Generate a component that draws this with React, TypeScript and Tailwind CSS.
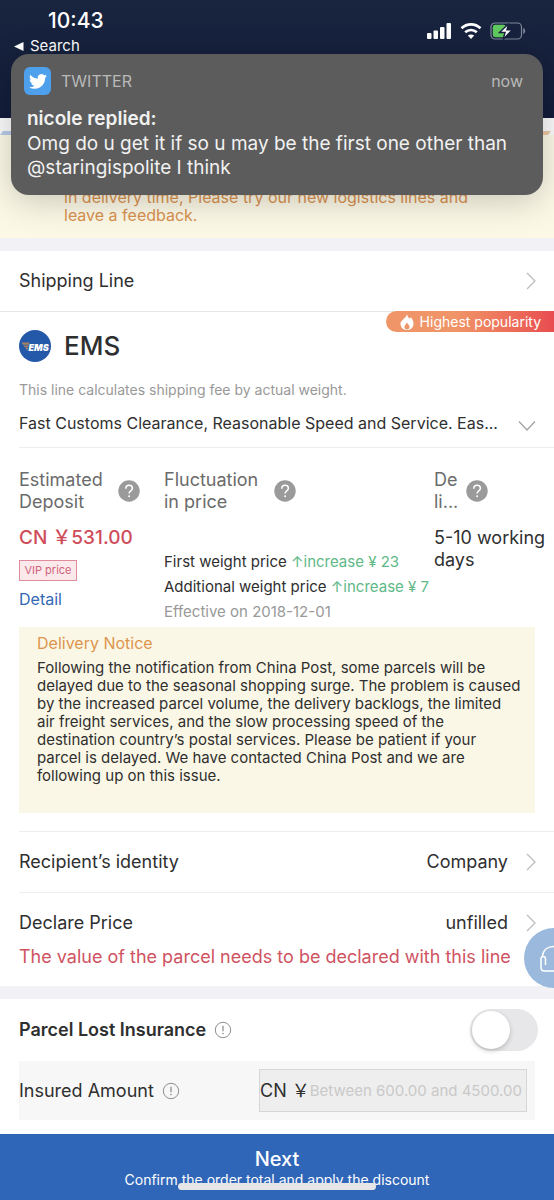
import React, { useState } from "react";

function Chevron({ down = false }: { down?: boolean }) {
  return down ? (
    <svg className="h-[18px] w-[18px] shrink-0 text-[#a3a3a3]" viewBox="0 0 18 18" fill="none" stroke="currentColor" strokeWidth="1.3" aria-hidden="true">
      <path d="M1 7.500l8 8.500 8-8.500" />
    </svg>
  ) : (
    <svg className="h-[18px] w-[10px] shrink-0 text-[#bdbdbd]" viewBox="0 0 10 18" fill="none" stroke="currentColor" strokeWidth="1.3" aria-hidden="true">
      <path d="M1 1l8 8-8 8" />
    </svg>
  );
}

function HelpButton({ label }: { label: string }) {
  return (
    <button type="button" aria-label={label} className="shrink-0">
      <svg className="h-[22px] w-[22px]" viewBox="0 0 22 22" fill="none" aria-hidden="true">
        <circle cx="11" cy="11" r="10.7" fill="#9a9a9a" />
        <path d="M7.8 8.7c0-2 1.3-3.4 3.3-3.4s3.3 1.2 3.3 2.9c0 2.6-3.3 2.7-3.3 5.3" stroke="#fff" strokeWidth="1.5" />
        <circle cx="11.1" cy="16.2" r="1" fill="#fff" />
      </svg>
    </button>
  );
}

function InfoButton({ label }: { label: string }) {
  return (
    <button type="button" aria-label={label} className="shrink-0">
      <svg className="h-[18px] w-[18px]" viewBox="0 0 18 18" fill="none" stroke="#8f8f8f" aria-hidden="true">
        <circle cx="9" cy="9" r="7.7" strokeWidth="1" />
        <path d="M9 4.8v5.4" strokeWidth="1.3" />
        <circle cx="9" cy="12.6" r=".8" fill="#8f8f8f" stroke="none" />
      </svg>
    </button>
  );
}

function StatusBar() {
  return (
    <header className="flex h-[118px] items-start justify-between bg-gradient-to-b from-[#19243f] to-[#131d3a] text-white">
      <div className="pt-[9px] pl-[14px]">
        <div className="pl-[34px] text-[21px] leading-6 font-medium">10:43</div>
        <a href="#search" className="mt-[3px] flex items-center gap-[6px] text-[15px] leading-5">
          <svg className="h-[9px] w-[10px]" viewBox="0 0 10 9" fill="currentColor" aria-hidden="true">
            <path d="M0 4.500L9.500 0v9z" />
          </svg>
          Search
        </a>
      </div>
      <div className="flex items-center gap-2 pt-[22px] pr-7">
        <svg className="h-[18px] w-[26px]" viewBox="0 0 26 18" fill="currentColor" aria-hidden="true">
          <rect x="1" y="11" width="4.5" height="6" rx="1" />
          <rect x="7.5" y="8.500" width="4.5" height="8.500" rx="1" />
          <rect x="14" y="5" width="4.5" height="12" rx="1" />
          <rect x="20.5" y="1" width="4.5" height="16" rx="1" />
        </svg>
        <svg className="h-[18px] w-[22px]" viewBox="0 0 22 18" fill="none" stroke="currentColor" strokeWidth="2.7" aria-hidden="true">
          <path d="M1.5 6.3c5.4-5.2 13.6-5.2 19 0" />
          <path d="M5.2 10.3c3.4-3.1 8.2-3.1 11.6 0" />
          <path d="M11 17l-3.2-3.4c1.9-1.6 4.5-1.6 6.4 0z" fill="currentColor" stroke="none" />
        </svg>
        <svg className="h-[18px] w-[36px]" viewBox="0 0 36 18" fill="none" aria-hidden="true">
          <rect x="1" y="1" width="30.5" height="16" rx="4" stroke="#7f879a" strokeWidth="1.2" />
          <path d="M33.2 6v6c1.2-.4 2-1.600 2-3s-.8-2.600-2-3z" fill="#7f879a" />
          <rect x="2.800" y="2.800" width="13" height="12.400" rx="2.400" fill="#5fc95f" />
          <path d="M18.800 1.500L9.500 10.500h5.600L13 17.500l9.500-9.800h-5.600z" fill="#fff" stroke="#16213d" strokeWidth="1.400" />
        </svg>
      </div>
    </header>
  );
}

function Notification() {
  return (
    <aside className="absolute top-[54px] right-[11px] left-[11px] h-[141px] rounded-[18px] bg-[#5c5c5c] px-4 pt-[13px] text-[#f1f1f1] shadow-[0_6px_34px_rgba(0,0,0,0.2)]">
      <div className="-ml-[3px] flex items-center gap-[10px] text-base leading-7 text-[#b9b9b9]">
        <span className="flex h-7 w-[27px] items-center justify-center rounded-md bg-[#4e9fec]">
          <svg className="h-[19px] w-[18px]" viewBox="0 0 24 24" fill="#fff" aria-hidden="true">
            <path d="M23.950 4.570a10 10 0 0 1-2.820.770 4.960 4.960 0 0 0 2.160-2.720c-.950.550-2 .950-3.130 1.180a4.920 4.920 0 0 0-8.380 4.480C7.690 8.100 4.070 6.130 1.640 3.160a4.820 4.820 0 0 0-.670 2.480c0 1.710.870 3.210 2.190 4.100a4.900 4.900 0 0 1-2.230-.620v.060a4.920 4.920 0 0 0 3.950 4.830 5 5 0 0 1-2.210.080 4.940 4.940 0 0 0 4.600 3.420A9.870 9.870 0 0 1 0 19.540a13.990 13.990 0 0 0 7.550 2.210c9.050 0 14-7.500 14-13.980 0-.210 0-.420-.020-.630a9.940 9.940 0 0 0 2.460-2.550z" />
          </svg>
        </span>
        <span className="grow">TWITTER</span>
        <span className="pr-1">now</span>
      </div>
      <p className="mt-3 text-[19px] leading-6 font-semibold">nicole replied:</p>
      <p className="mt-px text-[19px] leading-6">
        Omg do u get it if so u may be the first one other than @staringispolite I think
      </p>
    </aside>
  );
}

function EmsLogo() {
  return (
    <svg className="h-8 w-8 shrink-0" viewBox="0 0 32 32" role="img" aria-label="EMS logo">
      <circle cx="16" cy="16" r="16" fill="#2459a9" />
      <path d="M2.500 12.600h8l-.6 2.200H4zM4.500 15.400h5.200l-.6 2H6zM6.500 18h2.400l-.8 2.400z" fill="#a98062" />
      <text x="9.500" y="20.800" fill="#fff" fontFamily="Inter, sans-serif" fontSize="9" fontStyle="italic" fontWeight="900">
        EMS
      </text>
    </svg>
  );
}

function PriceChange({ label, amount }: { label: string; amount: string }) {
  return (
    <p className="text-[15px] leading-[25px] whitespace-nowrap">
      {label} <span className="text-[#60b987]">↑increase ¥ {amount}</span>
    </p>
  );
}

function Row({ label, value }: { label: string; value?: string }) {
  return (
    <button type="button" className="flex h-[60px] w-full items-center pr-[18px] text-left text-lg leading-6">
      <span className="grow">{label}</span>
      {value && <span className="mr-[18px]">{value}</span>}
      <Chevron />
    </button>
  );
}

export default function App() {
  const [insured, setInsured] = useState(false);
  return (
    <div className="relative flex min-h-screen flex-col overflow-x-hidden bg-white font-['Inter','Noto_Sans_CJK_SC',sans-serif] text-[#2f2f2f]">
      <StatusBar />
      <div className="flex h-[17px] items-end justify-between bg-[#fafafa]">
        <svg className="h-1 w-10" viewBox="0 0 40 4" aria-hidden="true"><path d="M3 0h37v4H0z" fill="#b6cbe5" /></svg>
        <svg className="h-1 w-10" viewBox="0 0 40 4" aria-hidden="true"><path d="M0 0h37l-3 4H0z" fill="#ebc5a2" /></svg>
      </div>
      <p className="border-b-[13px] border-[#f1f1f6] bg-[#fbf8e6] px-16 pt-[53px] pb-[14px] text-base leading-[18px] text-[#d9914f]">
        in delivery time, Please try our new logistics lines and leave a feedback.
      </p>
      <Notification />

      <main className="grow">
        <div className="border-b border-[#e6e6e6] pl-[19px]">
          <Row label="Shipping Line" />
        </div>

        <section className="relative pl-[19px]">
          <div className="absolute -top-px right-0 flex h-[21px] items-center gap-[5px] rounded-l-full bg-gradient-to-r from-[#f09567] from-40% to-[#e84c50] pr-[13px] pl-[13px] text-sm leading-5 text-white">
            <svg className="h-4 w-4" viewBox="0 0 16 16" fill="#fff" fillRule="evenodd" aria-hidden="true">
              <path d="M8 0c.3 2.200 1.400 3.400 2.700 4.800.5-.4.8-1 .9-1.700 1.900 2 2.900 4.200 2.900 6.600 0 3.500-2.600 6.300-6.500 6.300S1.500 13.200 1.500 9.700C1.500 5.700 7 4.800 8 0zM8 8.300c-.3 1.700-2.600 2.700-2.600 4.800 0 1.400 1.100 2.400 2.600 2.400s2.600-1 2.600-2.400c0-2.100-2.300-3.100-2.600-4.800z" />
            </svg>
            Highest popularity
          </div>
          <div className="flex items-center gap-[13px] pt-[14px]">
            <EmsLogo />
            <h1 className="text-[26px] leading-10 font-medium">EMS</h1>
          </div>
          <p className="mt-[14px] text-sm leading-5 text-[#999]">This line calculates shipping fee by actual weight.</p>
          <button type="button" className="mt-[10px] flex w-full items-center border-b border-[#ededed] pr-[18px] pb-[11px] text-left text-base leading-[26px]">
            <span className="min-w-0 grow">Fast Customs Clearance, Reasonable Speed and Service. Eas...</span>
            <Chevron down />
          </button>

          <div className="flex pt-[21px] text-lg leading-[22px]">
            <div className="w-[145px] shrink-0">
              <div className="flex items-center justify-between pr-6 text-[#6b6b6b]">
                <span className="w-[90px]">Estimated Deposit</span>
                <HelpButton label="About estimated deposit" />
              </div>
              <p className="mt-[14px] text-[19px] font-medium text-[#cf4c5b]">CN ￥531.00</p>
              <span className="mt-[11px] block w-[58px] border border-[#e08b9c] bg-[#fce9ec] text-center text-[11px] leading-[19px] text-[#d0637a]">VIP price</span>
              <a href="#detail" className="mt-[7px] block text-base leading-[22px] text-[#3468b4]">Detail</a>
            </div>
            <div className="min-w-0 grow">
              <div className="flex items-center gap-3 text-[#6b6b6b]">
                <span className="w-[98px]">Fluctuation in price</span>
                <HelpButton label="About price fluctuation" />
              </div>
              <div className="mt-9">
                <PriceChange label="First weight price" amount="23" />
                <PriceChange label="Additional weight price" amount="7" />
                <p className="text-[15px] leading-[25px] text-[#999]">Effective on 2018-12-01</p>
              </div>
            </div>
            <div className="w-[120px] shrink-0">
              <div className="flex items-center gap-2 text-[#6b6b6b]">
                <span>De<br />li...</span>
                <HelpButton label="About delivery time" />
              </div>
              <p className="mt-[14px]">5-10 working days</p>
            </div>
          </div>

          <div className="mt-[3px] mr-[19px] bg-[#fbf7e6] pt-[4px] pr-3 pb-[28px] pl-[18px]">
            <h2 className="text-base leading-6 text-[#dd954e]">Delivery Notice</h2>
            <p className="mt-[4px] text-[15px] leading-[18px]">
              Following the notification from China Post, some parcels will be delayed due to the seasonal shopping surge. The problem is caused by the increased parcel volume, the delivery backlogs, the limited air freight services, and the slow processing speed of the destination country’s postal services. Please be patient if your parcel is delayed. We have contacted China Post and we are following up on this issue.
            </p>
          </div>
          <div className="mt-[18px] border-t border-[#ededed]">
            <Row label="Recipient’s identity" value="Company" />
          </div>
          <div className="border-t border-[#ededed]">
            <Row label="Declare Price" value="unfilled" />
            <p className="-mt-2 pb-[17px] text-lg leading-6 whitespace-nowrap text-[#cf5362]">The value of the parcel needs to be declared with this line</p>
          </div>
          <button type="button" aria-label="Customer service" className="absolute right-[-30px] bottom-[-2px] z-10 h-[60px] w-[60px] rounded-full bg-[#9bb9dc]">
            <svg className="ml-[14px] h-8 w-8" viewBox="0 0 32 32" fill="none" stroke="#fff" strokeWidth="1.500" aria-hidden="true">
              <path d="M4.500 14C5 8 9.500 4.500 16 4.500S27 8 27.500 14" />
              <path d="M7.500 23v-6c0-3.500-4.500-3.500-4.500 0v8.500C3 28 4.500 29 6.500 29h19c2 0 3.500-1 3.500-3.500V17c0-3.500-4.500-3.500-4.500 0v6" />
            </svg>
          </button>
        </section>

        <section className="border-t-[13px] border-[#f1f1f6] px-[19px] pb-[14px]">
          <div className="flex h-[62px] items-center gap-2 text-lg leading-6">
            <h2 className="font-semibold">Parcel Lost Insurance</h2>
            <InfoButton label="About parcel lost insurance" />
            <label className="relative -mr-[3px] ml-auto block h-[42px] w-[68px] cursor-pointer rounded-full bg-[#e7e7e9] p-[2px]">
              <input
                type="checkbox"
                checked={insured}
                onChange={(e) => setInsured(e.target.checked)}
                aria-label="Parcel Lost Insurance"
                className="peer sr-only"
              />
              <span className="block h-[38px] w-[38px] rounded-full bg-white shadow-[0_2px_5px_rgba(0,0,0,0.2)] peer-checked:ml-[26px]" />
            </label>
          </div>
          <div className="flex h-[59px] items-center gap-2 bg-[#f7f7f7] pr-2 text-lg leading-6">
            <label htmlFor="insured-amount">Insured Amount</label>
            <InfoButton label="About insured amount" />
            <div className="ml-auto flex h-[43px] w-[268px] items-center border border-[#d6d6d6] bg-[#eeeeee]">
              <span className="shrink-0 whitespace-nowrap">CN ￥</span>
              <input
                id="insured-amount"
                type="text"
                placeholder="Between 600.00 and 4500.00"
                className="min-w-0 grow bg-transparent text-[15px] outline-none placeholder:text-[#c9c9c9]"
              />
            </div>
          </div>
        </section>
      </main>

      <footer className="relative h-[66px] bg-[#3066b8] text-white">
        <button type="button" className="flex h-full w-full flex-col items-center pt-3">
          <span className="text-xl leading-[26px] font-medium">Next</span>
          <span className="text-sm leading-4">Confirm the order total and apply the discount</span>
        </button>
        <span className="absolute bottom-[10px] left-1/2 h-[7px] w-[198px] -translate-x-1/2 rounded-full bg-[#e6e6e8]" />
      </footer>
    </div>
  );
}
